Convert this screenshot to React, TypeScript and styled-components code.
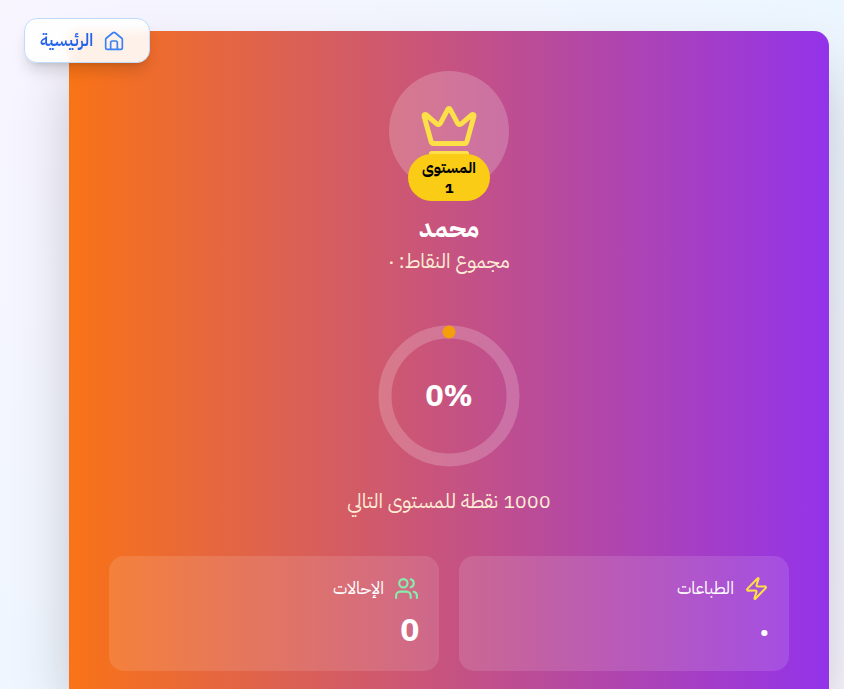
import React from "react";
import styled, { createGlobalStyle } from "styled-components";
import { Crown, Users, Zap } from "lucide-react";

const GlobalStyle = createGlobalStyle`
  *, *::before, *::after { box-sizing: border-box; }
  body {
    margin: 0;
    overflow-x: hidden;
    font-family: "IBM Plex Sans Arabic", "Noto Sans Arabic", "Noto Sans", "DejaVu Sans", sans-serif;
  }
`;

const Page = styled.div`
  display: flex;
  min-height: 100vh;
  padding: 31px 15px 0 69px;
  overflow: hidden;
  background: linear-gradient(to bottom left, #ecf6ff, #f8f5ff 50%, #eff6ff);
`;

const HomeLink = styled.a`
  position: fixed;
  top: 18px;
  left: 24px;
  z-index: 10;
  display: flex;
  align-items: center;
  gap: 11px;
  height: 45px;
  padding: 0 25px 0 15px;
  border: 1px solid #bfdbfe;
  border-radius: 13px;
  background: rgba(255, 255, 255, 0.9);
  box-shadow: 0 10px 15px -3px rgba(0, 0, 0, 0.15), 0 4px 6px -4px rgba(0, 0, 0, 0.15);
  backdrop-filter: blur(4px);
  color: #2563eb;
  font-size: 17px;
  font-weight: 600;
  line-height: 24px;
  text-decoration: none;
  svg { color: #3b82f6; }
`;

const Hero = styled.main`
  display: flex;
  flex: 1;
  flex-direction: column;
  align-items: center;
  min-width: 0;
  padding: 40px 40px 18px;
  border-radius: 0 15px 0 0;
  background: linear-gradient(to right, #f97316, #9333ea);
  box-shadow: 0 31px 62px -8px rgba(0, 0, 0, 0.25);
  color: #fff;
`;

const Avatar = styled.div`
  position: relative;
  display: grid;
  place-items: center;
  width: 120px;
  height: 120px;
  border-radius: 50%;
  background: rgba(255, 255, 255, 0.2);
  color: #fde047;
`;

const Level = styled.div`
  position: absolute;
  bottom: -10px;
  width: 82px;
  padding: 4px 12px 3px;
  border-radius: 24px;
  background: #facc15;
  color: #000;
  font-size: 15px;
  font-weight: 700;
  line-height: 20px;
  text-align: center;
`;

const Name = styled.h1`
  margin: 20px 0 0;
  font-size: 25px;
  font-weight: 700;
  line-height: 36px;
`;

const Note = styled.p`
  margin: 0;
  color: #ffedd5;
  font-size: 20px;
  line-height: 28px;
`;

const Ring = styled.div`
  display: grid;
  place-items: center;
  margin: 50px 0 20px;
  > * { grid-area: 1 / 1; }
`;

const Percent = styled.strong`
  font-size: 30px;
  line-height: 36px;
`;

const Stats = styled.section`
  display: grid;
  grid-template-columns: 1fr 1fr;
  gap: 20px;
  align-self: stretch;
  margin-top: 41px;
`;

const Stat = styled.article`
  padding: 20px;
  border-radius: 15px;
  background: rgba(255, 255, 255, 0.12);
`;

const StatLabel = styled.h2<{ $tint: string }>`
  display: flex;
  align-items: center;
  gap: 10px;
  margin: 0;
  color: #fff;
  font-size: 17px;
  font-weight: 400;
  line-height: 25px;
  svg { color: ${(p) => p.$tint}; }
`;

const StatValue = styled.p`
  margin: 10px 0 0;
  font-size: 31px;
  font-weight: 700;
  line-height: 40px;
`;

const HomeIcon = () => (
  <svg width="20" height="20" viewBox="0 0 24 24" fill="none" stroke="currentColor" strokeWidth="2" strokeLinecap="round" strokeLinejoin="round">
    <path d="M2 10.2a2 2 0 0 1 .7-1.5l8-6.6a2 2 0 0 1 2.6 0l8 6.6a2 2 0 0 1 .7 1.5V20a2 2 0 0 1-2 2H4a2 2 0 0 1-2-2z" />
    <path d="M8 22v-8a2 2 0 0 1 2-2h4a2 2 0 0 1 2 2v8" />
  </svg>
);

export default function App() {
  return (
    <Page dir="rtl">
      <GlobalStyle />
      <HomeLink href="#home">
        <HomeIcon />
        الرئيسية
      </HomeLink>
      <Hero>
        <Avatar>
          <Crown size={60} />
          <Level>المستوى 1</Level>
        </Avatar>
        <Name>محمد</Name>
        <Note>مجموع النقاط: ٠</Note>
        <Ring>
          <svg width="142" height="142" viewBox="0 0 142 142" fill="none">
            <circle cx="71" cy="71" r="64" stroke="#fff" strokeOpacity="0.2" strokeWidth="13" />
            <circle cx="71" cy="7" r="6.5" fill="#f59e0b" />
          </svg>
          <Percent dir="ltr">0%</Percent>
        </Ring>
        <Note>1000 نقطة للمستوى التالي</Note>
        <Stats>
          <Stat>
            <StatLabel $tint="#fde047"><Zap size={25} />الطباعات</StatLabel>
            <StatValue>٠</StatValue>
          </Stat>
          <Stat>
            <StatLabel $tint="#86efac"><Users size={25} />الإحالات</StatLabel>
            <StatValue>0</StatValue>
          </Stat>
        </Stats>
      </Hero>
    </Page>
  );
}
